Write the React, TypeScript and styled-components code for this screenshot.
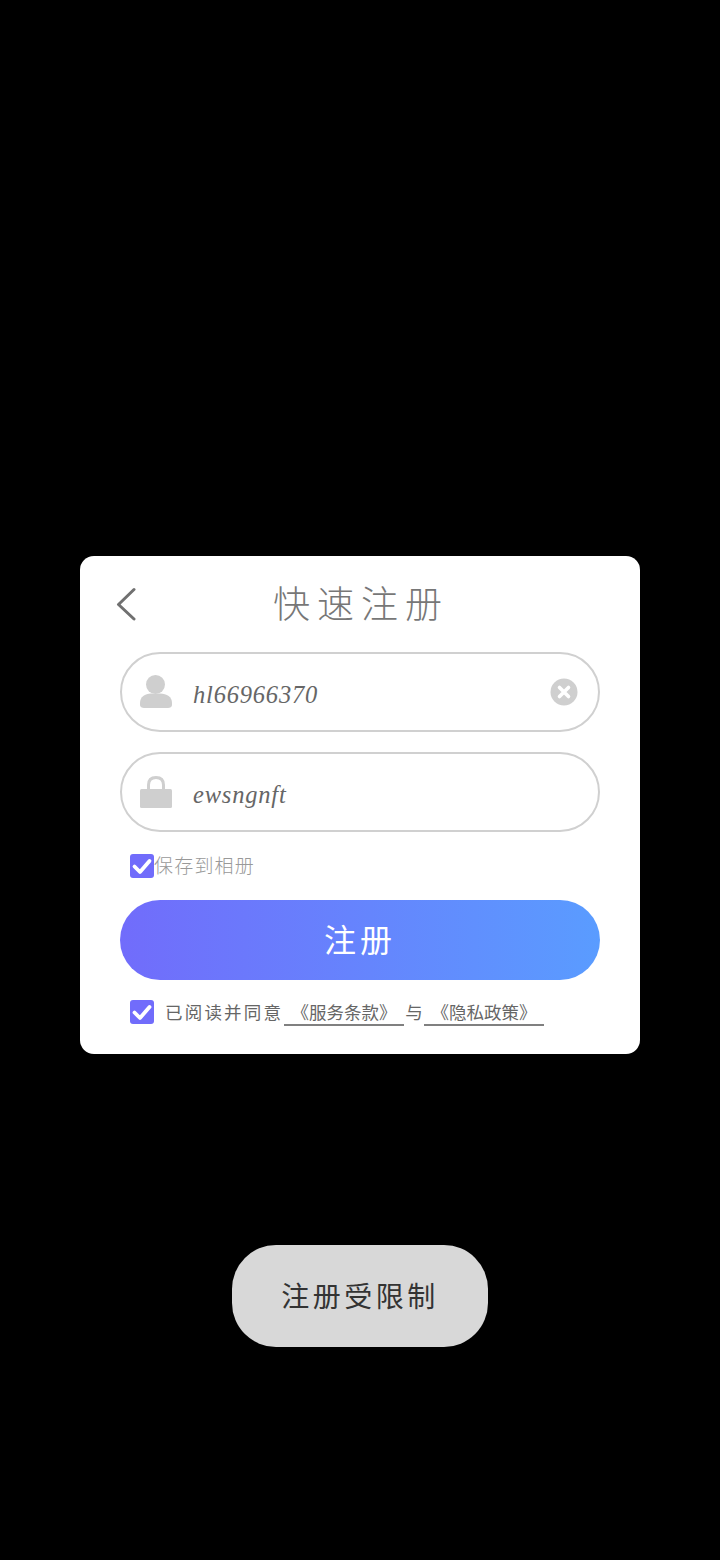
import React from "react";
import styled, { createGlobalStyle } from "styled-components";

const Global = createGlobalStyle`
  html, body { margin: 0; padding: 0; background: #000; }
  * { box-sizing: border-box; }
`;

const CJK = `"Noto Sans CJK SC", "Noto Sans", sans-serif`;

const Page = styled.div`
  width: 720px;
  height: 1560px;
  background: #000;
  padding-top: 556px;
  display: flex;
  flex-direction: column;
  align-items: center;
  font-family: ${CJK};
  overflow: hidden;
`;

const Card = styled.div`
  width: 560px;
  height: 498px;
  background: #fff;
  border-radius: 14px;
  padding: 0 40px;
  display: flex;
  flex-direction: column;
`;

const Header = styled.div`
  height: 96px;
  margin: 0 -40px;
  padding: 0 0 0 36px;
  display: grid;
  grid-template-columns: 1fr auto 1fr;
  align-items: center;
`;

const BackButton = styled.svg`
  width: 22px;
  height: 34px;
  display: block;
`;

const Title = styled.div`
  font-size: 37px;
  font-weight: 300;
  letter-spacing: 7px;
  line-height: 48px;
  margin-left: 2px;
  margin-right: 36px;
  padding-bottom: 4px;
  color: #777;
  white-space: nowrap;
`;

const Field = styled.div<{ $gap?: number }>`
  height: 80px;
  border: 2px solid #d0d0d0;
  border-radius: 40px;
  padding: 0 20px 0 18px;
  margin-top: ${(p) => p.$gap ?? 0}px;
  display: flex;
  align-items: center;
`;

const FieldIcon = styled.svg`
  width: 34px;
  height: 34px;
  flex: none;
  display: block;
  margin-left: -1px;
`;

const FieldText = styled.div`
  flex: 1;
  margin-left: 20px;
  padding-top: 6px;
  font-family: "Liberation Serif", serif;
  font-style: italic;
  font-size: 24.5px;
  letter-spacing: 0.8px;
  color: #666;
`;

const ClearIcon = styled.svg`
  width: 28px;
  height: 28px;
  flex: none;
  display: block;
`;

const CheckRow = styled.div<{ $top: number }>`
  height: 24px;
  margin-top: ${(p) => p.$top}px;
  padding-left: 10px;
  display: flex;
  align-items: center;
`;

const CheckBox = styled.svg`
  width: 24px;
  height: 24px;
  flex: none;
  display: block;
`;

const SaveLabel = styled.span`
  font-size: 19px;
  font-weight: 300;
  letter-spacing: 1.2px;
  line-height: 24px;
  padding-bottom: 3px;
  color: #999;
  white-space: nowrap;
`;

const Submit = styled.div`
  height: 80px;
  margin-top: 22px;
  padding-bottom: 4px;
  border-radius: 40px;
  background: linear-gradient(90deg, #716cfb 0%, #5a9cff 100%);
  display: flex;
  align-items: center;
  justify-content: center;
  color: #fff;
  font-size: 32px;
  font-weight: 400;
  letter-spacing: 4px;
`;

const TermsText = styled.span`
  font-size: 17.5px;
  font-weight: 400;
  color: #666;
  white-space: nowrap;
`;

const TermsLead = styled(TermsText)`
  margin-left: 11px;
  width: 119px;
  letter-spacing: 2.2px;
  padding-bottom: 2px;
`;

const TermsLink = styled(TermsText)`
  width: 120px;
  height: 26px;
  line-height: 24px;
  margin-top: 2px;
  border-bottom: 2px solid #808080;
  text-align: center;
  letter-spacing: 0;
`;

const TermsAnd = styled(TermsText)`
  width: 20px;
  text-align: center;
  padding-bottom: 2px;
`;

const Toast = styled.div`
  width: 256px;
  height: 102px;
  margin-top: 191px;
  padding-bottom: 2px;
  border-radius: 44px;
  background: #d8d8d8;
  display: flex;
  align-items: center;
  justify-content: center;
  color: #333;
  font-size: 28px;
  font-weight: 400;
  letter-spacing: 3.5px;
  white-space: nowrap;
`;

const Check = () => (
  <CheckBox viewBox="0 0 24 24">
    <rect width="24" height="24" rx="3" fill="#716cfb" />
    <path d="M4.5 12.5 L10 18 L19.5 7" fill="none" stroke="#fff" strokeWidth="3.8" strokeLinecap="round" strokeLinejoin="round" />
  </CheckBox>
);

export default function App() {
  return (
    <Page>
      <Global />
      <Card>
        <Header>
          <BackButton viewBox="0 0 22 34">
            <path d="M18 2.5 L2.5 17.5 L18 32" fill="none" stroke="#707070" strokeWidth="3" strokeLinecap="round" strokeLinejoin="round" />
          </BackButton>
          <Title>快速注册</Title>
          <span />
        </Header>
        <Field>
          <FieldIcon viewBox="0 0 34 34">
            <circle cx="16.5" cy="9.5" r="9.5" fill="#cfcfcf" />
            <path d="M1 28 C1 22 6 18.5 12 18.5 H21 C28 18.5 33 22 33 28 V30 C33 32 31 33 29 33 H5 C3 33 1 32 1 30 Z" fill="#cfcfcf" />
          </FieldIcon>
          <FieldText>hl66966370</FieldText>
          <ClearIcon viewBox="0 0 28 28">
            <circle cx="14" cy="14" r="13.5" fill="#cfcfcf" />
            <path d="M9.5 9.5 L18.5 18.5 M18.5 9.5 L9.5 18.5" stroke="#fff" strokeWidth="3.6" strokeLinecap="round" />
          </ClearIcon>
        </Field>
        <Field $gap={20}>
          <FieldIcon viewBox="0 0 34 34">
            <path d="M9.5 15 V10 C9.5 5 12.5 2.5 17 2.5 C21.5 2.5 24.5 5 24.5 10 V15" fill="none" stroke="#cfcfcf" strokeWidth="3" />
            <rect x="1" y="14" width="32" height="19" rx="1.5" fill="#cfcfcf" />
          </FieldIcon>
          <FieldText>ewsngnft</FieldText>
        </Field>
        <CheckRow $top={22}>
          <Check />
          <SaveLabel>保存到相册</SaveLabel>
        </CheckRow>
        <Submit>注册</Submit>
        <CheckRow $top={20}>
          <Check />
          <TermsLead>已阅读并同意</TermsLead>
          <TermsLink>《服务条款》</TermsLink>
          <TermsAnd>与</TermsAnd>
          <TermsLink>《隐私政策》</TermsLink>
        </CheckRow>
      </Card>
      <Toast>注册受限制</Toast>
    </Page>
  );
}
